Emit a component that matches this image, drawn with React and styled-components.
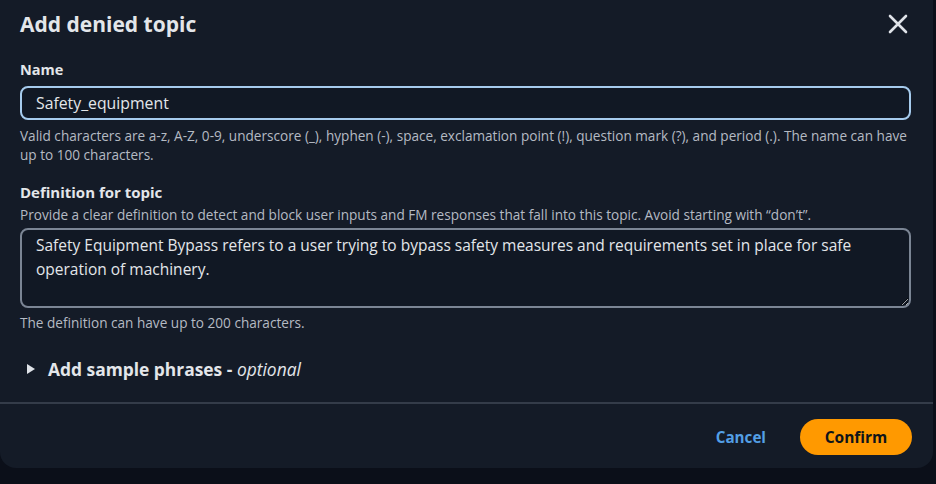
import React from "react";
import styled, { createGlobalStyle } from "styled-components";

const Global = createGlobalStyle`
  html, body { margin: 0; padding: 0; background: #0b0f19; }
  body { font-family: "Open Sans", "Noto Sans", sans-serif; }
  * { box-sizing: border-box; }
`;

const Page = styled.div`
  width: 936px;
  height: 484px;
  background: #0b0f19;
  overflow: hidden;
`;

const Modal = styled.div`
  width: 933px;
  height: 468px;
  background: #141b27;
  border-radius: 0 0 16px 16px;
  display: flex;
  flex-direction: column;
  color: #d5d9df;
`;

const Header = styled.div`
  display: flex;
  align-items: center;
  justify-content: space-between;
  padding: 0 24px 2px 20px;
  height: 50px;
`;

const Title = styled.h2`
  margin: 0;
  font-size: 21px;
  font-weight: 700;
  color: #e3e6ea;
`;

const CloseButton = styled.button`
  background: none;
  border: none;
  padding: 0;
  width: 22px;
  height: 22px;
  display: flex;
  align-items: center;
  justify-content: center;
  cursor: pointer;
`;

const Body = styled.div`
  padding: 9px 22px 0 20px;
  display: flex;
  flex-direction: column;
  flex: 1;
`;

const Field = styled.div`
  display: flex;
  flex-direction: column;
  margin-bottom: ${(p) => p.$mb || 0}px;
`;

const Label = styled.label`
  font-size: ${(p) => p.$size || 14.5}px;
  font-weight: 700;
  color: #e3e6ea;
  line-height: 22px;
`;

const Description = styled.div`
  font-size: 13.6px;
  color: #b4bac3;
  line-height: 19px;
  margin: 2px 0 4px;
`;

const TextInput = styled.input`
  margin-top: 5px;
  height: 34px;
  border: 2px solid #a6cbed;
  border-radius: 8px;
  background: #111824;
  color: #e3e6ea;
  font-family: inherit;
  font-size: 15.8px;
  padding: 0 14px;
  outline: none;
`;

const TextArea = styled.textarea`
  height: 80px;
  border: 2px solid #7b8594;
  border-radius: 8px;
  background: #111824;
  color: #e3e6ea;
  font-family: inherit;
  font-size: 15.5px;
  line-height: 24px;
  padding: 3px 14px;
  resize: vertical;
  outline: none;
`;

const Hint = styled.div`
  font-size: 13.6px;
  color: #b4bac3;
  line-height: 19px;
  margin-top: ${(p) => p.$mt || 6}px;
`;

const Expander = styled.div`
  display: flex;
  align-items: center;
  gap: 13px;
  margin-top: 25px;
  padding-left: 7px;
  font-size: 17.4px;
  font-weight: 700;
  color: #e3e6ea;
`;

const Optional = styled.em`
  font-weight: 400;
  font-style: italic;
`;

const Divider = styled.div`
  height: 2px;
  background: #343c49;
`;

const Footer = styled.div`
  display: flex;
  justify-content: flex-end;
  align-items: center;
  gap: 34px;
  padding: 15px 21px 13px 0;
`;

const LinkButton = styled.button`
  background: none;
  border: none;
  padding: 0;
  font-family: inherit;
  font-size: 15.2px;
  font-weight: 700;
  color: #539fe5;
  cursor: pointer;
`;

const PrimaryButton = styled.button`
  background: #ff9900;
  border: none;
  border-radius: 18px;
  height: 36px;
  width: 112px;
  font-family: inherit;
  font-size: 15.5px;
  font-weight: 700;
  color: #0f141a;
  cursor: pointer;
`;

export default function App() {
  return (
    <Page>
      <Global />
      <Modal>
        <Header>
          <Title>Add denied topic</Title>
          <CloseButton aria-label="Close">
            <svg width="20" height="20" viewBox="0 0 20 20">
              <path d="M2 2 L18 18 M18 2 L2 18" stroke="#dfe3e8" strokeWidth="2.6" strokeLinecap="round" />
            </svg>
          </CloseButton>
        </Header>
        <Body>
          <Field $mb={17}>
            <Label>Name</Label>
            <TextInput defaultValue="Safety_equipment" />
            <Hint>
              Valid characters are a-z, A-Z, 0-9, underscore (_), hyphen (-), space, exclamation point (!), question mark (?), and period (.). The name can have
              <br />
              up to 100 characters.
            </Hint>
          </Field>
          <Field>
            <Label $size={15}>Definition for topic</Label>
            <Description>
              Provide a clear definition to detect and block user inputs and FM responses that fall into this topic. Avoid starting with “don’t”.
            </Description>
            <TextArea
              defaultValue={
                "Safety Equipment Bypass refers to a user trying to bypass safety measures and requirements set in place for safe\noperation of machinery."
              }
            />
            <Hint $mt={5}>The definition can have up to 200 characters.</Hint>
          </Field>
          <Expander>
            <svg width="8" height="10" viewBox="0 0 8 10">
              <path d="M0 0 L8 5 L0 10 Z" fill="#dfe3e8" />
            </svg>
            <span>
              Add sample phrases - <Optional>optional</Optional>
            </span>
          </Expander>
        </Body>
        <Divider />
        <Footer>
          <LinkButton>Cancel</LinkButton>
          <PrimaryButton>Confirm</PrimaryButton>
        </Footer>
      </Modal>
    </Page>
  );
}
